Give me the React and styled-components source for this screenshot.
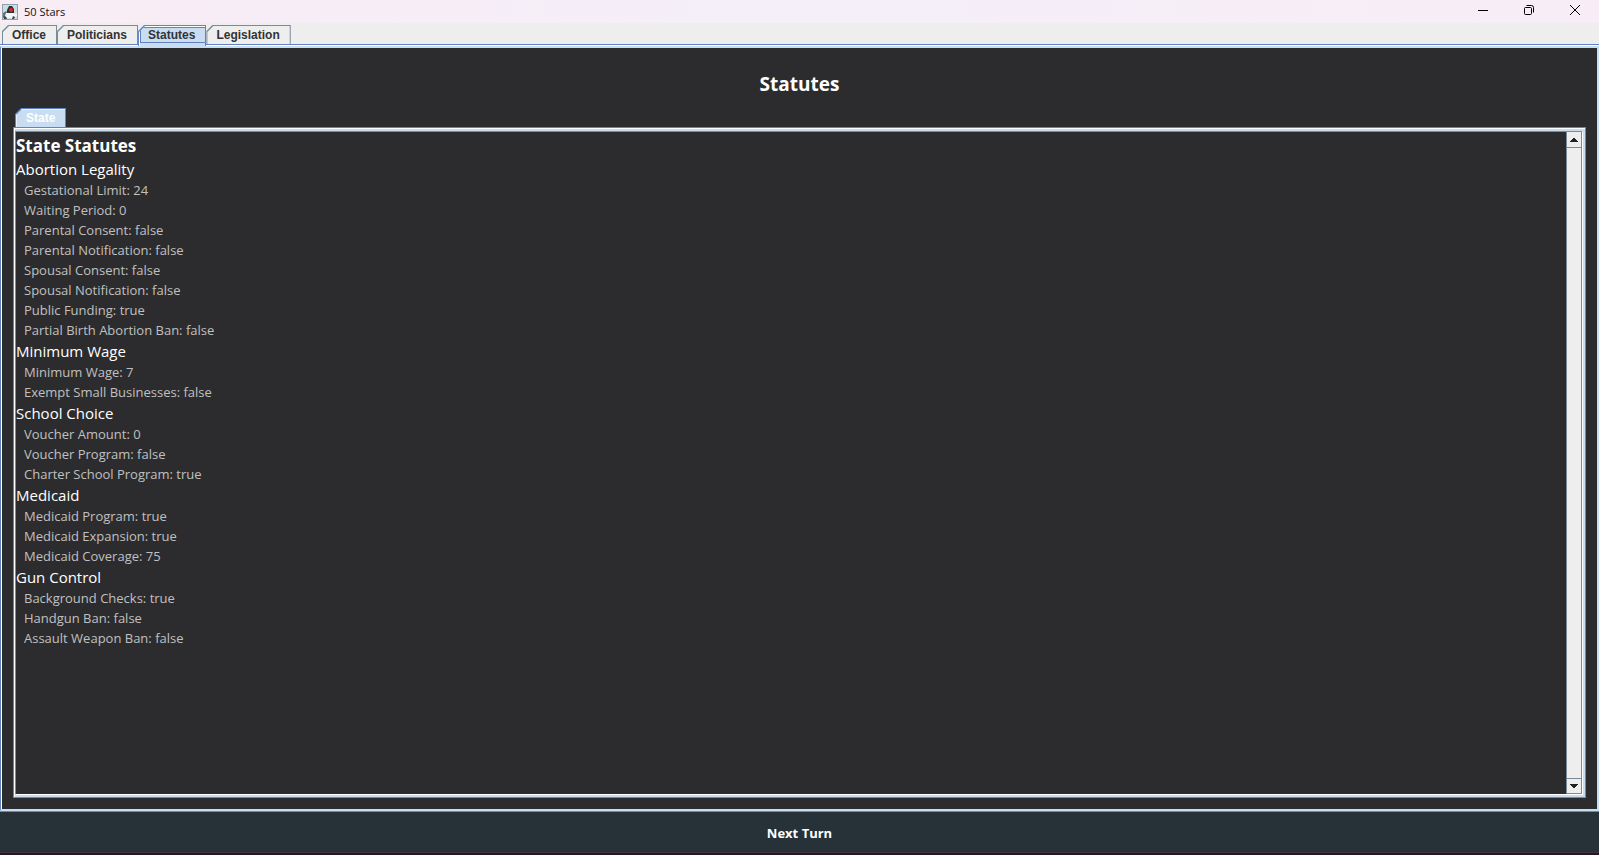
import React, { useRef, useState } from "react";
import styled, { createGlobalStyle } from "styled-components";

const GlobalStyle = createGlobalStyle`
  * {
    box-sizing: border-box;
  }
  body {
    margin: 0;
    background: #2c2c2e;
    font-family: "Open Sans", "Noto Sans", sans-serif;
  }
  button {
    border: 0;
    padding: 0;
    background: none;
    font-family: inherit;
    cursor: default;
  }
`;

const StyledWindow = styled.div`
  display: flex;
  flex-direction: column;
  height: 100vh;
`;

// title bar
const StyledTitleBar = styled.header`
  display: flex;
  align-items: center;
  height: 23px;
  padding: 0 1px 0 2px;
  background: linear-gradient(90deg, #f9ecf5, #f4eff9 50%, #f8edf6);
`;

const StyledTitle = styled.span`
  flex: 1;
  margin-left: 6px;
  font-size: 11px;
  line-height: 16px;
  color: #111;
`;

const StyledWindowButton = styled.button`
  display: flex;
  justify-content: center;
  align-items: center;
  align-self: flex-start;
  width: 46px;
  height: 20px;
`;

// tabs
const StyledTabBar = styled.nav`
  display: flex;
  height: 21px;
  padding: 2px 2px 0;
  background: #eeeeee;
`;

const StyledTab = styled.button`
  position: relative;
  z-index: 0;
  height: 19px;
  padding: 1px 11px 0 10px;
  background: ${(props) => (props.$selected ? "#6382bf" : "#7a8a99")};
  clip-path: polygon(6px 0, 100% 0, 100% 100%, 0 100%, 0 6px);
  font-family: "Liberation Sans", Arial, sans-serif;
  font-size: 12px;
  font-weight: 700;
  line-height: 16px;
  color: #333;
  &::before {
    content: "";
    position: absolute;
    z-index: -1;
    inset: 1px 1px 0 1px;
    background: ${(props) => (props.$selected ? "#c8ddf2" : "#eeeeee")};
    clip-path: polygon(6px 0, 100% 0, 100% 100%, 0 100%, 0 6px);
  }
`;

// selected tab runs over the pane border and has a focus line
const StyledFocusTab = styled(StyledTab)`
  height: 21px;
  padding: 0 11px 1px 10px;
  &::before {
    box-shadow: inset 1px 1px #fff, inset 0 -3px #c8ddf2,
      inset 2px 2px #6382bf, inset 0 -4px #6382bf;
  }
`;

const StyledStateTab = styled(StyledTab)`
  align-self: flex-start;
  margin-left: 2px;
  padding: 1px 11px 0;
  color: #fff;
  &::before {
    box-shadow: inset 1px 1px #e8f1fa;
  }
`;

const StyledPaneWrap = styled.div`
  flex: 1;
  min-height: 0;
  display: flex;
  flex-direction: column;
  padding-top: 1px;
  border-top: 1px solid #6382bf;
  border-bottom: 1px solid #7a8a99;
  background: #fff;
`;

const StyledPane = styled.main`
  flex: 1;
  min-height: 0;
  display: flex;
  flex-direction: column;
  padding: 0 11px 11px 12px;
  background: #2c2c2e;
  border-style: solid;
  border-width: 2px 2px 2px 1px;
  border-color: #c8ddf2 #c8ddf2 #c8ddf2 #6382bf;
  box-shadow: inset 1px 0 #fff;
`;

const StyledHeading = styled.h1`
  margin: 0;
  padding: 23px 0 10px;
  text-align: center;
  font-size: 19px;
  line-height: 27px;
  color: #fff;
`;

// frame round the state list
const StyledFrame = styled.section`
  flex: 1;
  min-height: 0;
  display: flex;
  border: 1px solid #6382bf;
  border-right-color: #7a8a99;
  border-bottom-color: #7a8a99;
  padding: 3px 3px 3px 1px;
  background: #c8ddf2;
  box-shadow: inset 1px 1px #fff;
`;

const StyledScrollPane = styled.div`
  flex: 1;
  display: flex;
  min-width: 0;
  border-left: 1px solid #7a8a99;
  border-top: 1px solid #7a8a99;
  background: #2c2c2e;
  box-shadow: 1px 1px #fff;
`;

const StyledList = styled.div`
  flex: 1;
  overflow: auto;
  scrollbar-width: none;
`;

const StyledListTitle = styled.h2`
  margin: 0;
  padding-top: 2px;
  font-size: 17px;
  line-height: 24px;
  color: #fff;
`;

const StyledGroupTitle = styled.h3`
  margin: 0;
  font-size: 15px;
  font-weight: 400;
  line-height: 22px;
  color: #fff;
`;

const StyledItems = styled.ul`
  margin: 0;
  padding: 0 0 0 8px;
  list-style: none;
  font-size: 13px;
  line-height: 20px;
  color: #c0c0c0;
`;

const StyledScrollBar = styled.div`
  display: flex;
  flex-direction: column;
  justify-content: space-between;
  width: 16px;
  border-left: 1px solid #7a8a99;
  border-right: 1px solid #7a8a99;
  background: #eeeeee;
`;

const StyledArrow = styled.button`
  display: flex;
  align-items: center;
  justify-content: center;
  height: 16px;
  border-style: solid;
  border-color: #7a8a99;
  border-width: ${(props) => (props.$down ? "1px 0" : "0 0 1px")};
`;

const StyledNextTurn = styled.button`
  height: 40px;
  padding-top: 2px;
  background: #263238;
  color: #fff;
  font-size: 13px;
  font-weight: 700;
  line-height: 20px;
`;

const StyledBottomEdge = styled.div`
  height: 3px;
  background: #21182a;
  border-top: 1px solid #43353f;
`;

const tabs = ["Office", "Politicians", "Statutes", "Legislation"];

const statutes = [
  {
    name: "Abortion Legality",
    items: [
      ["Gestational Limit", 24],
      ["Waiting Period", 0],
      ["Parental Consent", false],
      ["Parental Notification", false],
      ["Spousal Consent", false],
      ["Spousal Notification", false],
      ["Public Funding", true],
      ["Partial Birth Abortion Ban", false],
    ],
  },
  {
    name: "Minimum Wage",
    items: [
      ["Minimum Wage", 7],
      ["Exempt Small Businesses", false],
    ],
  },
  {
    name: "School Choice",
    items: [
      ["Voucher Amount", 0],
      ["Voucher Program", false],
      ["Charter School Program", true],
    ],
  },
  {
    name: "Medicaid",
    items: [
      ["Medicaid Program", true],
      ["Medicaid Expansion", true],
      ["Medicaid Coverage", 75],
    ],
  },
  {
    name: "Gun Control",
    items: [
      ["Background Checks", true],
      ["Handgun Ban", false],
      ["Assault Weapon Ban", false],
    ],
  },
];

function DukeIcon() {
  return (
    <svg width="16" height="16" viewBox="0 0 16 16" aria-hidden="true">
      <rect x="0.5" y="0.5" width="15" height="15" fill="#cddbe3" stroke="#8ea2ae" />
      <path d="M1 9l3-2 2 3-1 4H1z" fill="#65757f" />
      <path d="M7 2h3l2 3v4H5V6z" fill="#2b3236" />
      <path d="M4 9h7l2 1 2-1v3l-3 2H5l-2-2z" fill="#f5f8fa" />
      <path d="M2 12l2 1 1 2H2zM11 12l2 1-1 2h-2z" fill="#39444b" />
      <circle cx="9" cy="6" r="2" fill="#dc2a22" />
    </svg>
  );
}

function App() {
  const [tab, setTab] = useState("Statutes");
  const listRef = useRef(null);

  const onScroll = (amount) => {
    listRef.current.scrollTop += amount;
  };

  return (
    <StyledWindow>
      <GlobalStyle />
      <StyledTitleBar>
        <DukeIcon />
        <StyledTitle>50 Stars</StyledTitle>
        <StyledWindowButton aria-label="Minimize">
          <svg width="10" height="10" viewBox="0 0 10 10">
            <path d="M0 5.500h10" stroke="#000" />
          </svg>
        </StyledWindowButton>
        <StyledWindowButton aria-label="Restore">
          <svg width="10" height="10" viewBox="0 0 10 10" fill="none" stroke="#000">
            <rect x="0.500" y="2.500" width="7" height="7" rx="1" />
            <path d="M2.500 0.500h5a2 2 0 0 1 2 2v5" />
          </svg>
        </StyledWindowButton>
        <StyledWindowButton aria-label="Close">
          <svg width="10" height="10" viewBox="0 0 10 10">
            <path d="M0 0l10 10M10 0l-10 10" stroke="#000" />
          </svg>
        </StyledWindowButton>
      </StyledTitleBar>
      <StyledTabBar>
        {tabs.map((name) => {
          const Tab = name === tab ? StyledFocusTab : StyledTab;
          return (
            <Tab key={name} $selected={name === tab} onClick={() => setTab(name)}>
              {name}
            </Tab>
          );
        })}
      </StyledTabBar>
      <StyledPaneWrap>
        <StyledPane>
          <StyledHeading>Statutes</StyledHeading>
          <StyledStateTab $selected>State</StyledStateTab>
          <StyledFrame>
            <StyledScrollPane>
              <StyledList ref={listRef}>
                <StyledListTitle>State Statutes</StyledListTitle>
                {statutes.map((group) => (
                  <div key={group.name}>
                    <StyledGroupTitle>{group.name}</StyledGroupTitle>
                    <StyledItems>
                      {group.items.map(([label, value]) => (
                        <li key={label}>{`${label}: ${value}`}</li>
                      ))}
                    </StyledItems>
                  </div>
                ))}
              </StyledList>
              <StyledScrollBar>
                <StyledArrow aria-label="Scroll up" onClick={() => onScroll(-20)}>
                  <svg width="8" height="4" viewBox="0 0 8 4">
                    <path d="M3 0h2v1h1v1h1v1h1v1H0V3h1V2h1V1h1z" fill="#222" />
                  </svg>
                </StyledArrow>
                <StyledArrow $down aria-label="Scroll down" onClick={() => onScroll(20)}>
                  <svg width="8" height="4" viewBox="0 0 8 4">
                    <path d="M0 0h8v1H7v1H6v1H5v1H3V3H2V2H1V1H0z" fill="#222" />
                  </svg>
                </StyledArrow>
              </StyledScrollBar>
            </StyledScrollPane>
          </StyledFrame>
        </StyledPane>
      </StyledPaneWrap>
      <StyledNextTurn>Next Turn</StyledNextTurn>
      <StyledBottomEdge />
    </StyledWindow>
  );
}

export default App;
